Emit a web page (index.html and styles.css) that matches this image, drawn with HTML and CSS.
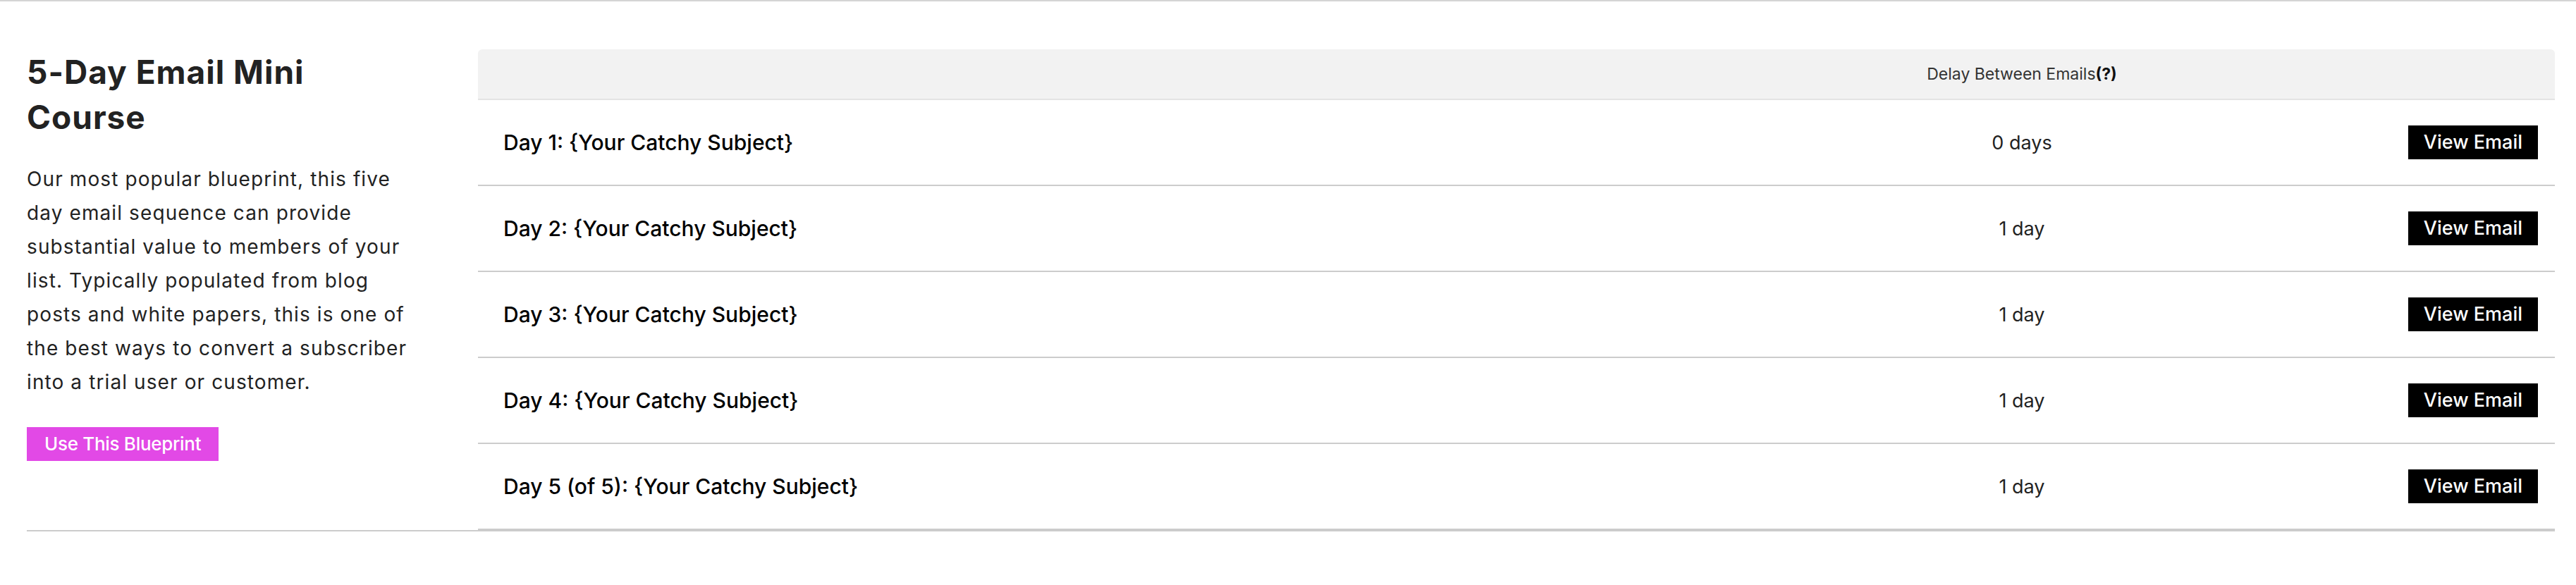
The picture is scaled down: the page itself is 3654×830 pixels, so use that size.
FILE: index.html
```html
<!DOCTYPE html>
<html lang="en">
<head>
<meta charset="utf-8">
<title>Email Blueprints</title>
<link rel="stylesheet" href="styles.css">
</head>
<body>
<div class="page">
  <section class="blueprint">
    <div class="intro">
      <h2 class="title">5-Day Email Mini Course</h2>
      <p class="desc">Our most popular blueprint, this five day email sequence can provide substantial value to members of your list. Typically populated from blog posts and white papers, this is one of the best ways to convert a subscriber into a trial user or customer.</p>
      <a class="use-btn" href="#">Use This Blueprint</a>
    </div>
    <div class="table">
      <div class="thead">
        <div class="cell"></div>
        <div class="cell delay-head">Delay Between Emails<b>(?)</b></div>
        <div class="cell"></div>
      </div>
      <div class="row">
        <div class="cell subject">Day 1: {Your Catchy Subject}</div>
        <div class="cell delay">0 days</div>
        <div class="cell action"><a class="view-btn" href="#">View Email</a></div>
      </div>
      <div class="row">
        <div class="cell subject">Day 2: {Your Catchy Subject}</div>
        <div class="cell delay">1 day</div>
        <div class="cell action"><a class="view-btn" href="#">View Email</a></div>
      </div>
      <div class="row">
        <div class="cell subject">Day 3: {Your Catchy Subject}</div>
        <div class="cell delay">1 day</div>
        <div class="cell action"><a class="view-btn" href="#">View Email</a></div>
      </div>
      <div class="row">
        <div class="cell subject">Day 4: {Your Catchy Subject}</div>
        <div class="cell delay">1 day</div>
        <div class="cell action"><a class="view-btn" href="#">View Email</a></div>
      </div>
      <div class="row">
        <div class="cell subject">Day 5 (of 5): {Your Catchy Subject}</div>
        <div class="cell delay">1 day</div>
        <div class="cell action"><a class="view-btn" href="#">View Email</a></div>
      </div>
    </div>
  </section>
  <section class="blueprint next">
    <div class="intro">
      <h2 class="title">5-Week Email Mini Course</h2>
    </div>
    <div class="table">
      <div class="thead thead-short"></div>
    </div>
  </section>
</div>
</body>
</html>
```
FILE: styles.css
```css
html, body {
  margin: 0;
  padding: 0;
  background: #fff;
}
body {
  font-family: "Inter", "Lato", "Liberation Sans", sans-serif;
  color: #222;
}
.page {
  border-top: 2px solid #d4d4d4;
  padding: 0 30px 0 38px;
}
.blueprint {
  display: flex;
  padding-top: 68px;
  border-bottom: 2px solid #cccccc;
}
.blueprint.next {
  margin-top: 60px;
  border-bottom: none;
}
.intro {
  width: 640px;
  flex: none;
}
.title {
  margin: 0;
  width: 480px;
  font-size: 46px;
  line-height: 64px;
  font-weight: 700;
  color: #222;
  letter-spacing: 1px;
}
.desc {
  margin: 32px 0 0;
  width: 550px;
  font-size: 28px;
  line-height: 48px;
  letter-spacing: 1.1px;
  color: #222;
}
.use-btn {
  display: inline-block;
  margin-top: 40px;
  height: 48px;
  line-height: 48px;
  padding: 0 25px;
  background: #e249e6;
  color: #fff;
  font-size: 26px;
  font-weight: 500;
  letter-spacing: -0.3px;
  text-decoration: none;
}
.table {
  flex: 1;
}
.thead,
.row {
  display: grid;
  grid-template-columns: 1770px 840px 1fr;
  align-items: center;
}
.thead {
  height: 70px;
  background: #f2f2f2;
  border-radius: 6px 6px 0 0;
  border-bottom: 2px solid #e4e4e4;
}
.thead-short {
  height: 120px;
}
.row {
  height: 120px;
  border-bottom: 2px solid #cccccc;
}
.delay-head {
  text-align: center;
  font-size: 23px;
  color: #333;
}
.delay-head b {
  font-weight: 700;
  color: #111;
}
.subject {
  padding-left: 36px;
  font-size: 30px;
  font-weight: 500;
  color: #000;
}
.delay {
  text-align: center;
  font-size: 27px;
  color: #222;
}
.action {
  display: flex;
  justify-content: flex-end;
  padding-right: 24px;
}
.view-btn {
  display: block;
  height: 48px;
  line-height: 48px;
  padding: 0 22px;
  background: #000;
  color: #fff;
  font-size: 27px;
  font-weight: 500;
  text-decoration: none;
}
```
